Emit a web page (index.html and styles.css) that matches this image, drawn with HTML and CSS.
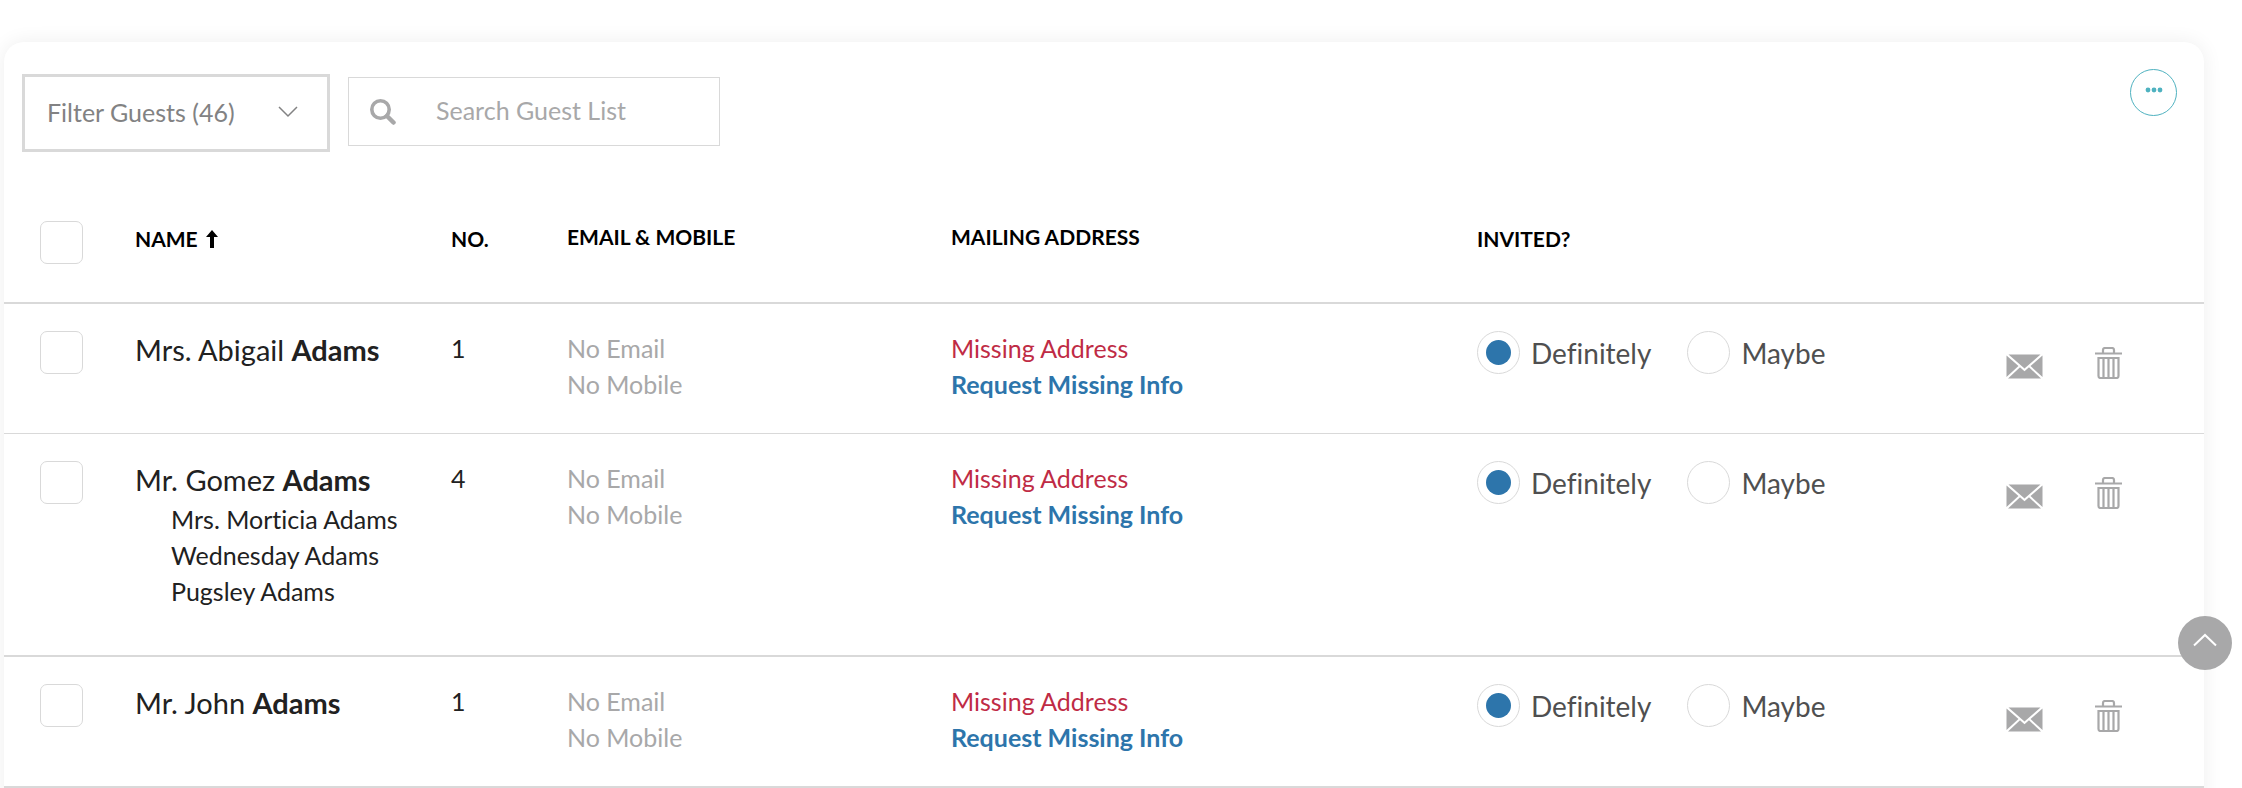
FILE: index.html
```html
<!DOCTYPE html>
<html lang="en">
<head>
    <meta charset="UTF-8">
    <meta name="viewport" content="width=device-width, initial-scale=1.0">
    <title>Guest List</title>
    <link rel="stylesheet" href="styles.css">
</head>
<body>
    <svg class="sprite" aria-hidden="true">
        <symbol id="mail" viewBox="0 0 37 25">
            <path fill="#a8a8a9" d="M2.500 0.500h32L18.500 14.500zM0.500 1.500l12 10.500L0.500 23zM36.500 1.500l-12 10.500L36.500 23zM14 13.300l4.500 4 4.500-4L35 24.500H2z"/>
        </symbol>
        <symbol id="trash" viewBox="0 0 27 32">
            <g fill="none" stroke="#a8a8a9" stroke-width="2.200">
                <path d="M0 6.500h27M8 6V3q0-2 2-2h7q2 0 2 2v3"/>
                <path d="M3.500 11h20v18q0 2-2 2h-16q-2 0-2-2zM8.500 11v19M13.500 11v19M18.500 11v19"/>
            </g>
        </symbol>
    </svg>

    <div class="page">
        <main class="card">
            <div class="toolbar">
                <div class="filter">
                    <select class="filter-select" aria-label="Filter guests">
                        <option>Filter Guests (46)</option>
                    </select>
                    <svg class="filter-arrow" width="20" height="12" viewBox="0 0 20 12"><path d="M1 1l9 9 9-9" fill="none" stroke="#828283" stroke-width="1.500"/></svg>
                </div>
                <div class="search">
                    <svg class="search-icon" width="26" height="26" viewBox="0 0 26 26"><circle cx="10.500" cy="10.500" r="8.700" fill="none" stroke="#a8a8a9" stroke-width="3.600"/><path d="M17 17l6.500 6.500" stroke="#a8a8a9" stroke-width="4.500" stroke-linecap="round"/></svg>
                    <input class="search-input" type="text" placeholder="Search Guest List" aria-label="Search guest list">
                </div>
                <button class="more" type="button" aria-label="More options">
                    <svg width="18" height="6" viewBox="0 0 18 6" fill="#4fb2c0"><circle cx="3" cy="3" r="2.400"/><circle cx="9" cy="3" r="2.400"/><circle cx="15" cy="3" r="2.400"/></svg>
                </button>
            </div>

            <table class="guests">
                <colgroup>
                    <col class="col-check">
                    <col class="col-name">
                    <col class="col-no">
                    <col class="col-email">
                    <col class="col-address">
                    <col class="col-invited">
                    <col class="col-mail">
                    <col class="col-trash">
                </colgroup>
                <thead>
                    <tr>
                        <th class="check-cell"><input class="check" type="checkbox" aria-label="Select all guests"></th>
                        <th class="sortable"><button class="sort" type="button">NAME
                            <svg width="12" height="18" viewBox="0 0 12 18"><path d="M6 0l6 7H8v11H4V7H0z"/></svg></button></th>
                        <th class="sortable"><button class="sort" type="button">NO.</button></th>
                        <th>EMAIL &amp; MOBILE</th>
                        <th>MAILING ADDRESS</th>
                        <th class="sortable"><button class="sort" type="button">INVITED?</button></th>
                        <th></th>
                        <th></th>
                    </tr>
                </thead>
                <tbody>
                    <tr class="guest-thin">
                        <td class="check-cell"><input class="check" type="checkbox" aria-label="Select Mrs. Abigail Adams"></td>
                        <td><div class="name">Mrs. Abigail <b>Adams</b></div></td>
                        <td>1</td>
                        <td class="muted">No Email<br>No Mobile</td>
                        <td><span class="missing">Missing Address</span><br><a class="request" href="#">Request Missing Info</a></td>
                        <td class="invited-cell">
                            <div class="invited">
                                <label class="choice"><input class="radio" type="radio" name="invited1" checked>Definitely</label>
                                <label class="choice"><input class="radio" type="radio" name="invited1">Maybe</label>
                            </div>
                        </td>
                        <td class="mail-cell"><button class="icon" type="button" aria-label="Send email"><svg width="37" height="25"><use href="#mail"/></svg></button></td>
                        <td class="trash-cell"><button class="icon" type="button" aria-label="Delete guest"><svg width="27" height="32"><use href="#trash"/></svg></button></td>
                    </tr>
                    <tr>
                        <td class="check-cell"><input class="check" type="checkbox" aria-label="Select Mr. Gomez Adams"></td>
                        <td>
                            <div class="name">Mr. Gomez <b>Adams</b></div>
                            <ul class="party">
                                <li>Mrs. Morticia Adams</li>
                                <li>Wednesday Adams</li>
                                <li>Pugsley Adams</li>
                            </ul>
                        </td>
                        <td>4</td>
                        <td class="muted">No Email<br>No Mobile</td>
                        <td><span class="missing">Missing Address</span><br><a class="request" href="#">Request Missing Info</a></td>
                        <td class="invited-cell">
                            <div class="invited">
                                <label class="choice"><input class="radio" type="radio" name="invited2" checked>Definitely</label>
                                <label class="choice"><input class="radio" type="radio" name="invited2">Maybe</label>
                            </div>
                        </td>
                        <td class="mail-cell"><button class="icon" type="button" aria-label="Send email"><svg width="37" height="25"><use href="#mail"/></svg></button></td>
                        <td class="trash-cell"><button class="icon" type="button" aria-label="Delete guest"><svg width="27" height="32"><use href="#trash"/></svg></button></td>
                    </tr>
                    <tr>
                        <td class="check-cell"><input class="check" type="checkbox" aria-label="Select Mr. John Adams"></td>
                        <td><div class="name">Mr. John <b>Adams</b></div></td>
                        <td>1</td>
                        <td class="muted">No Email<br>No Mobile</td>
                        <td><span class="missing">Missing Address</span><br><a class="request" href="#">Request Missing Info</a></td>
                        <td class="invited-cell">
                            <div class="invited">
                                <label class="choice"><input class="radio" type="radio" name="invited3" checked>Definitely</label>
                                <label class="choice"><input class="radio" type="radio" name="invited3">Maybe</label>
                            </div>
                        </td>
                        <td class="mail-cell"><button class="icon" type="button" aria-label="Send email"><svg width="37" height="25"><use href="#mail"/></svg></button></td>
                        <td class="trash-cell"><button class="icon" type="button" aria-label="Delete guest"><svg width="27" height="32"><use href="#trash"/></svg></button></td>
                    </tr>
                </tbody>
            </table>
        </main>
    </div>

    <button class="to-top" type="button" aria-label="Back to top">
        <svg width="24" height="14" viewBox="0 0 24 14"><path d="M1 12.500L12 2l11 10.500" fill="none" stroke="#fff" stroke-width="2"/></svg>
    </button>
</body>
</html>
```

FILE: styles.css
```css
* {
    box-sizing: border-box;
}

body {
    margin: 0;
    background: #fff;
    color: #212121;
    font-family: Lato, "Liberation Sans", sans-serif;
    font-size: 25px;
    line-height: 36px;
    font-variant-ligatures: none;
}

button, input, select {
    margin: 0;
    padding: 0;
    font: inherit;
    color: inherit;
    border: 0;
    background: none;
}

svg {
    display: block;
}

.sprite {
    position: absolute;
    width: 0;
    height: 0;
}

.page {
    height: 100vh;
    overflow: hidden;
    padding: 42px 38px 0 4px;
}

.card {
    min-height: 100vh;
    border-radius: 20px;
    background: #fff;
    box-shadow: 0 0 20px rgba(0, 0, 0, 0.07);
}

/* toolbar */
.toolbar {
    display: flex;
    align-items: flex-start;
    gap: 18px;
    padding: 32px 27px 0 18px;
}

.filter {
    position: relative;
}

.filter-select {
    display: block;
    width: 308px;
    height: 78px;
    padding: 0 22px 3px;
    appearance: none;
    border: 3px solid #d9d9d9;
    color: #828283;
}

.filter-arrow {
    position: absolute;
    top: 32px;
    right: 32px;
    pointer-events: none;
}

.search {
    display: flex;
    align-items: center;
    gap: 40px;
    width: 372px;
    height: 69px;
    margin-top: 3px;
    padding-left: 21px;
    border: 1px solid #d9d9d9;
}

.search-icon {
    flex: none;
}

.search-input {
    width: 100%;
    min-width: 0;
    height: 40px;
    padding-bottom: 4px;
}

.search-input::placeholder {
    color: #a8a8a9;
    opacity: 1;
}

.more {
    display: flex;
    justify-content: center;
    width: 47px;
    height: 47px;
    margin: -5px 0 0 auto;
    padding-top: 17px;
    border: 1px solid #4fb2c0;
    border-radius: 50%;
}

/* guest table */
.guests {
    width: 100%;
    table-layout: fixed;
    border-collapse: separate;
    border-spacing: 0;
}

.col-check { width: 131px; }
.col-name { width: 316px; }
.col-no { width: 116px; }
.col-email { width: 384px; }
.col-address { width: 526px; }
.col-mail { width: 89px; }
.col-trash { width: 109px; }

.guests th {
    height: 152px;
    padding: 67px 0 0;
    vertical-align: top;
    text-align: left;
    font-size: 21px;
    font-weight: bold;
    color: #000;
    border-bottom: 2px solid #d9d9d9;
}

.guests th.sortable,
.guests th.check-cell {
    padding-top: 69px;
}

.guests td {
    height: 131px;
    padding: 26px 0 0;
    vertical-align: top;
    border-bottom: 2px solid #d9d9d9;
}

.guests .guest-thin td {
    height: 130px;
    border-bottom-width: 1px;
}

.guests .check-cell {
    padding-left: 36px;
}

.guests td.check-cell,
.guests td.invited-cell {
    padding-top: 27px;
}

.sort {
    display: flex;
    align-items: center;
    gap: 8px;
}

.check {
    display: block;
    width: 43px;
    height: 43px;
    appearance: none;
    border: 1px solid #d9d9d9;
    border-radius: 7px;
}

.name {
    padding: 2px 0 3px;
    font-size: 29px;
}

.party {
    margin: 0;
    padding: 0 0 46px 36px;
    list-style: none;
}

.muted {
    color: #a8a8a9;
}

.missing {
    color: #bf2b45;
}

.request {
    color: #2d75ab;
    font-weight: bold;
    text-decoration: none;
}

.invited {
    display: flex;
    gap: 36px;
}

.choice {
    display: flex;
    align-items: center;
    gap: 11px;
    font-size: 28px;
    color: #4f4f50;
}

.radio {
    width: 43px;
    height: 43px;
    appearance: none;
    border: 1px solid #d9d9d9;
    border-radius: 50%;
}

.radio:checked {
    padding: 8px;
    background: #2d75ab content-box;
}

.guests .mail-cell {
    padding-top: 50px;
}

.guests .trash-cell {
    padding-top: 43px;
}

.icon {
    display: block;
}

.to-top {
    position: fixed;
    right: 10px;
    bottom: 118px;
    display: flex;
    justify-content: center;
    width: 54px;
    height: 54px;
    padding-top: 17px;
    border-radius: 50%;
    background: #a8a8a9;
}
```
